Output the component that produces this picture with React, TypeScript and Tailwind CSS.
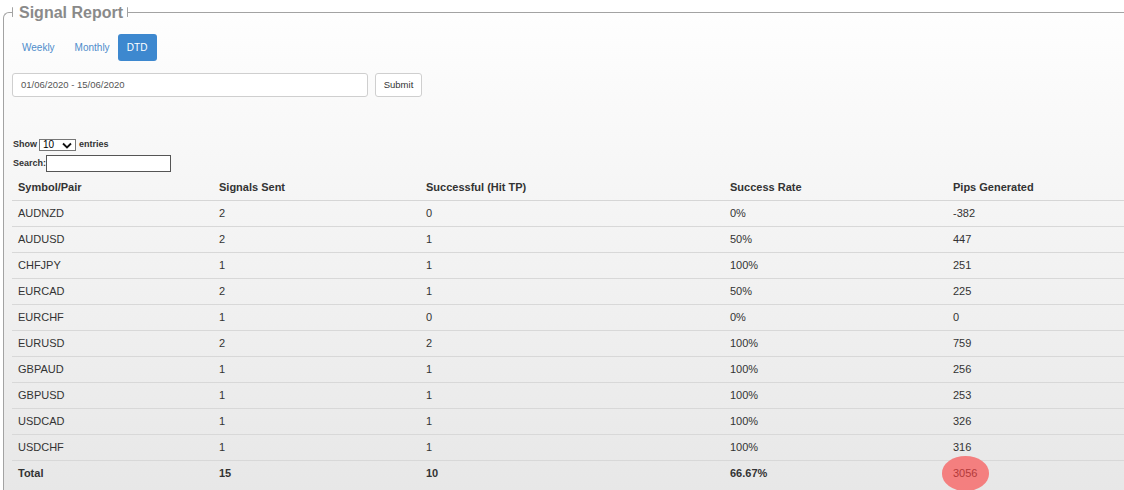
import React from "react";

const rows = [
  ["AUDNZD", "2", "0", "0%", "-382"],
  ["AUDUSD", "2", "1", "50%", "447"],
  ["CHFJPY", "1", "1", "100%", "251"],
  ["EURCAD", "2", "1", "50%", "225"],
  ["EURCHF", "1", "0", "0%", "0"],
  ["EURUSD", "2", "2", "100%", "759"],
  ["GBPAUD", "1", "1", "100%", "256"],
  ["GBPUSD", "1", "1", "100%", "253"],
  ["USDCAD", "1", "1", "100%", "326"],
  ["USDCHF", "1", "1", "100%", "316"],
];

export default function App() {
  return (
    <div className="w-[1124px] h-[490px] overflow-hidden bg-white font-['Liberation_Sans',Arial,sans-serif] text-[#333]">
      <fieldset className="mt-[2px] ml-[3px] w-[1140px] h-[520px] border-l border-t border-[#a3a3a3] rounded-tl-[6px] pl-[8px] pr-0 pt-[12px] bg-gradient-to-b from-[#fefefe] to-[#e6e6e6]">
        <legend className="flex items-center h-[20px] leading-[20px]">
          <span className="w-[1px] h-[10px] bg-[#a3a3a3] rounded-full" />
          <span className="pl-[6px] pr-[4px] pt-[1px] text-[16px] font-bold text-[#8a8a8a]">Signal Report</span>
          <span className="w-[1px] h-[10px] bg-[#a3a3a3] rounded-full" />
        </legend>

        <div className="flex items-center text-[10px]">
          <span className="h-[27px] px-[10px] flex items-center text-[#4f8ccb]">Weekly</span>
          <span className="h-[27px] px-[10px] flex items-center text-[#4f8ccb]">Monthly</span>
          <span className="ml-[-2px] h-[27px] w-[39px] flex items-center justify-center rounded-[3px] bg-[#3d88cf] text-white">DTD</span>
        </div>

        <div className="mt-[12px] flex items-center gap-[7px]">
          <div className="w-[356px] h-[24px] border border-[#cfcfcf] rounded-[3px] bg-white flex items-center pl-[8px] text-[9.5px] text-[#555]">
            01/06/2020 - 15/06/2020
          </div>
          <button className="w-[47px] h-[24px] border border-[#cfcfcf] rounded-[3px] bg-white text-[9.5px] text-[#333]">
            Submit
          </button>
        </div>

        <div className="mt-[42px] flex items-center h-[12px] text-[9px] font-bold text-[#333] pl-[1px]">
          <span>Show</span>
          <span className="ml-[2px] w-[37px] h-[12px] border border-[#767676] bg-white flex items-center justify-between pl-[3px] pr-[3px] font-normal text-[10px] text-black">
            <span className="leading-[10px]">10</span>
            <svg width="10" height="7" viewBox="0 0 10 7">
              <path d="M1 1.5 L5 5.5 L9 1.5" stroke="#111" strokeWidth="1.8" fill="none" />
            </svg>
          </span>
          <span className="ml-[3px]">entries</span>
        </div>

        <div className="mt-[4px] flex items-center h-[17px] text-[9px] font-bold text-[#333] pl-[1px]">
          <span>Search:</span>
          <span className="w-[125px] h-[17px] border border-[#555] bg-white" />
        </div>

        <table className="mt-[2px] table-fixed border-collapse w-[1112px] text-[11px] text-[#333]">
          <colgroup>
            <col className="w-[201px]" />
            <col className="w-[207px]" />
            <col className="w-[304px]" />
            <col className="w-[223px]" />
            <col />
          </colgroup>
          <thead>
            <tr className="h-[26px] border-b border-[#d6d6d6]">
              {["Symbol/Pair", "Signals Sent", "Successful (Hit TP)", "Success Rate", "Pips Generated"].map((h) => (
                <th key={h} className="px-[6px] text-left font-bold">{h}</th>
              ))}
            </tr>
          </thead>
          <tbody>
            {rows.map((r) => (
              <tr key={r[0]} className="h-[26px] border-b border-[#d8d8d8]">
                {r.map((c, i) => (
                  <td key={i} className="px-[6px]">{c}</td>
                ))}
              </tr>
            ))}
            <tr className="h-[26px]">
              <td className="px-[6px] font-bold">Total</td>
              <td className="px-[6px] font-bold">15</td>
              <td className="px-[6px] font-bold">10</td>
              <td className="px-[6px] font-bold">66.67%</td>
              <td className="px-[6px]">
                <span className="relative inline-block">
                  <span className="absolute left-[-11px] right-[-12px] top-[-9px] bottom-[-9px] rounded-[50%] bg-[#f47f7f]" />
                  <span className="relative text-[#b33a3a]">3056</span>
                </span>
              </td>
            </tr>
          </tbody>
        </table>
      </fieldset>
    </div>
  );
}
